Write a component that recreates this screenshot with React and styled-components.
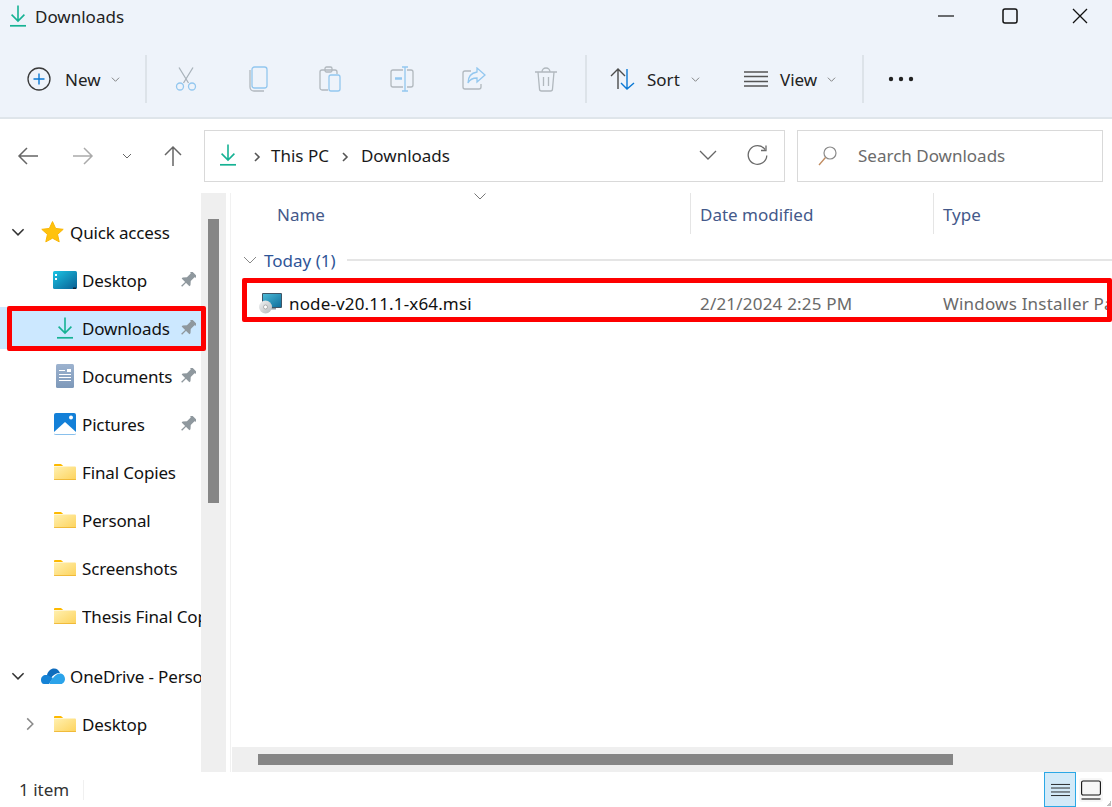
import React from "react";
import styled, { createGlobalStyle } from "styled-components";

const Global = createGlobalStyle`
  html, body { margin: 0; padding: 0; background: #fff; }
  * { box-sizing: border-box; }
`;

const Page = styled.div`
  position: relative;
  width: 1112px;
  height: 807px;
  overflow: hidden;
  display: flex;
  flex-direction: column;
  background: #fff;
  color: #1a1a1a;
  font-family: "Noto Sans", "Open Sans", sans-serif;
  font-size: 17px;
`;
const Header = styled.header`
  height: 119px;
  flex: none;
  background: #eef3fa;
  border-bottom: 2px solid #dfe5ea;
`;
const TitleBar = styled.div`
  height: 32px;
  display: flex;
  align-items: center;
  padding-left: 10px;
  gap: 9px;
`;
const TitleText = styled.span`
  font-size: 17px;
  color: #222;
`;
const WindowControls = styled.div`
  margin-left: auto;
  display: flex;
  align-items: center;
`;
const WindowButton = styled.div`
  width: ${(p) => p.$w}px;
  display: flex;
  justify-content: center;
`;
const Toolbar = styled.div`
  margin-top: 23px;
  height: 48px;
  display: flex;
  align-items: center;
`;
const Divider = styled.div`
  width: 2px;
  height: 48px;
  flex: none;
  background: #dde3e9;
`;
const ToolNew = styled.div`
  width: 145px;
  padding-left: 27px;
  display: flex;
  align-items: center;
`;
const ToolIcon = styled.div`
  width: 72px;
  display: flex;
  justify-content: center;
`;
const ToolLabel = styled.span`
  font-size: 17px;
  color: #222;
  margin: 0 ${(p) => p.$mr}px 0 ${(p) => p.$ml}px;
`;
const ToolGroup = styled.div`
  width: ${(p) => p.$w}px;
  padding-left: ${(p) => p.$pl}px;
  display: flex;
  align-items: center;
`;
const Spacer = styled.div`
  width: ${(p) => p.$w}px;
  flex: none;
`;
const AddressRow = styled.div`
  height: 74px;
  flex: none;
  display: flex;
  align-items: flex-start;
  padding-top: 11px;
`;
const NavGroup = styled.div`
  width: 204px;
  height: 52px;
  display: flex;
  align-items: center;
`;
const NavButton = styled.div`
  width: ${(p) => p.$w}px;
  display: flex;
  justify-content: center;
`;
const AddressBox = styled.div`
  width: 581px;
  height: 52px;
  border: 1px solid #d9d9d9;
  display: flex;
  align-items: center;
  padding: 0 0 2px 15px;
  color: #1a1a1a;
`;
const Crumb = styled.span`
  font-size: 17px;
  margin: 0 ${(p) => p.$mr || 0}px 0 ${(p) => p.$ml || 0}px;
`;
const AddressEnd = styled.div`
  margin-left: auto;
  display: flex;
  align-items: center;
  gap: 30px;
  padding-right: 16px;
`;
const SearchBox = styled.div`
  width: 306px;
  height: 52px;
  margin-left: 12px;
  border: 1px solid #d9d9d9;
  display: flex;
  align-items: center;
  padding: 0 0 1px 20px;
  gap: 21px;
  color: #6b6b6b;
  font-size: 17px;
`;
const Body = styled.div`
  flex: 1;
  min-height: 0;
  display: flex;
`;
const Sidebar = styled.nav`
  width: 201px;
  flex: none;
  padding-top: 15px;
  overflow: hidden;
`;
const NavRow = styled.div`
  height: 48px;
  padding: 3px 0;
`;
const RowInner = styled.div`
  height: 42px;
  display: flex;
  align-items: center;
  background: ${(p) => (p.$selected ? "#cce8ff" : "transparent")};
`;
const ChevronSlot = styled.div`
  width: ${(p) => (p.$child ? 48 : 36)}px;
  flex: none;
  display: flex;
  justify-content: center;
  padding-left: ${(p) => (p.$child ? 12 : 0)}px;
`;
const IconSlot = styled.div`
  width: ${(p) => p.$w}px;
  flex: none;
  display: flex;
  justify-content: center;
  padding-right: 1px;
`;
const NavLabel = styled.span`
  flex: 1;
  min-width: 0;
  overflow: hidden;
  white-space: nowrap;
  font-size: 17px;
  letter-spacing: -0.15px;
  color: #111;
`;
const PinSlot = styled.div`
  width: 27px;
  flex: none;
  display: flex;
  justify-content: center;
`;
const GroupGap = styled.div`
  height: 12px;
`;
const VTrack = styled.div`
  width: 25px;
  flex: none;
  background: #efefef;
  padding: 26px 7px 0;
`;
const VThumb = styled.div`
  width: 11px;
  height: 284px;
  background: #868686;
`;
const Pane = styled.section`
  flex: 1;
  min-width: 0;
  margin-left: 4px;
  border-left: 1px solid #f1f1f1;
  display: flex;
  flex-direction: column;
`;
const Columns = styled.div`
  display: grid;
  grid-template-columns: 459px 243px 1fr;
  align-items: center;
`;
const HeadCell = styled.div`
  position: relative;
  height: 41px;
  display: flex;
  align-items: center;
  padding-top: 1px;
  padding-left: ${(p) => p.$pl}px;
  border-left: ${(p) => (p.$line ? "1px solid #e5e5e5" : "none")};
  color: #44598a;
  font-size: 17px;
`;
const SortMark = styled.div`
  position: absolute;
  left: 243px;
  top: 0;
  line-height: 0;
`;
const GroupRow = styled.div`
  height: 24px;
  margin-top: 14px;
  display: flex;
  align-items: center;
  padding-left: 12px;
  color: #2f5597;
  font-size: 17px;
`;
const GroupLabel = styled.span`
  margin-left: 7px;
`;
const GroupLine = styled.div`
  flex: 1;
  height: 2px;
  margin-left: 11px;
  background: #e5e5e5;
`;
const FileRow = styled(Columns)`
  height: 44px;
  margin-top: 9px;
  white-space: nowrap;
`;
const FileName = styled.div`
  display: flex;
  align-items: center;
  gap: 7px;
  padding-left: 28px;
  font-size: 17px;
  letter-spacing: 0.15px;
  color: #111;
`;
const FileMeta = styled.div`
  padding-left: 10px;
  color: #6a6a6a;
  font-size: 17px;
  letter-spacing: 0.2px;
  overflow: hidden;
`;
const PaneFill = styled.div`
  flex: 1;
`;
const HTrack = styled.div`
  height: 25px;
  flex: none;
  margin-left: 1px;
  background: #efefef;
  padding: 7px 0 0 26px;
`;
const HThumb = styled.div`
  width: 695px;
  height: 11px;
  background: #868686;
`;
const StatusBar = styled.footer`
  height: 35px;
  flex: none;
  display: flex;
  align-items: center;
  padding-left: 19px;
  font-size: 17px;
  color: #333;
`;
const StatusLine = styled.div`
  position: relative;
  width: 1px;
  height: 20px;
  margin-left: 14px;
  background: #f0f0f0;
`;
const ViewButtons = styled.div`
  margin-left: auto;
  display: flex;
  align-items: center;
  gap: 3px;
  padding-right: 9px;
  height: 100%;
`;
const ViewButton = styled.div`
  width: ${(p) => (p.$on ? 32 : 24)}px;
  height: ${(p) => (p.$on ? 35 : 24)}px;
  display: flex;
  align-items: center;
  justify-content: center;
  background: ${(p) => (p.$on ? "#d3eaf8" : "#f6f6f6")};
  border: ${(p) => (p.$on ? "1px solid #2ba8e6" : "none")};
  border-radius: ${(p) => (p.$on ? 0 : 3)}px;
`;
const Annotation = styled.div`
  position: absolute;
  left: ${(p) => p.$x}px;
  top: ${(p) => p.$y}px;
  width: ${(p) => p.$w}px;
  height: ${(p) => p.$h}px;
  border: 5px solid #fe0000;
  border-radius: 2px;
  pointer-events: none;
`;
const ResizeGrip = styled.div`
  position: absolute;
  right: 1px;
  bottom: 1px;
  width: 5px;
  height: 5px;
  background: linear-gradient(135deg, transparent 50%, #bdbdbd 50%);
`;

const DownloadIcon = ({ w = 16, h = 22 }) => (
  <svg width={w} height={h} viewBox="0 0 16 22" fill="none" stroke="#16b294" strokeWidth="1.6">
    <path d="M8 0.5V16M1.6 9.6L8 16l6.4-6.4" />
    <path d="M0 20.8h16" strokeWidth="1.7" />
  </svg>
);
const Chev = ({ s = 10, c = "#666", w = 1, dir = "down" }) => (
  <svg width={s} height={s} viewBox="0 0 10 10" fill="none" stroke={c} strokeWidth={w}>
    <path d={dir === "down" ? "M1 3l4 4 4-4" : "M3 1l4 4-4 4"} />
  </svg>
);
const Folder = () => (
  <svg width="22" height="16" viewBox="0 0 22 16">
    <defs>
      <linearGradient id="fg" x1="0" y1="0" x2="1" y2="1">
        <stop offset="0" stopColor="#fff0b0" />
        <stop offset="1" stopColor="#fdd35c" />
      </linearGradient>
    </defs>
    <path d="M0 1.2C0 .5.5 0 1.2 0H7l2.2 2H0z" fill="#fdb900" />
    <path d="M0 2.500h21a1 1 0 0 1 1 1V15a1 1 0 0 1-1 1H1a1 1 0 0 1-1-1z" fill="url(#fg)" />
    <path d="M0 15.200h22V16H0z" fill="#eeb32e" />
  </svg>
);
const Star = () => (
  <svg width="23" height="22" viewBox="0 0 24 23">
    <path d="M12 .6l3.3 7.2 7.9.9-5.9 5.3 1.7 7.8L12 18l-7 3.8 1.7-7.8L.8 8.7l7.9-.9z" fill="#ffc20e" stroke="#f9b400" strokeWidth="1" strokeLinejoin="round" />
  </svg>
);
const Monitor = () => (
  <svg width="24" height="18" viewBox="0 0 24 18">
    <defs>
      <linearGradient id="mg" x1="0" y1="0" x2="1" y2="1">
        <stop offset="0" stopColor="#1bc4e4" />
        <stop offset="1" stopColor="#0a5f93" />
      </linearGradient>
    </defs>
    <rect width="24" height="18" rx="1.5" fill="url(#mg)" />
    <path d="M2 3h2v2H2zM2 7h2v2H2z" fill="#fff" />
    <path d="M20 16.5h3V18h-3z" fill="#123" />
  </svg>
);
const Doc = () => (
  <svg width="18" height="24" viewBox="0 0 18 24">
    <defs>
      <linearGradient id="dg" x1="0" y1="0" x2="0" y2="1">
        <stop offset="0" stopColor="#9db3cf" />
        <stop offset="1" stopColor="#7d98b9" />
      </linearGradient>
    </defs>
    <rect width="18" height="24" rx="1.5" fill="url(#dg)" />
    <path d="M3 6h6v1H3zM3 10h12v1H3zM3 13h12v1H3zM3 16h12v1H3z" fill="#fff" />
    <path d="M11 5h4v3h-4z" fill="#fff" />
  </svg>
);
const Picture = () => (
  <svg width="22" height="22" viewBox="0 0 22 22">
    <rect width="22" height="22" rx="2" fill="#1380d8" />
    <path d="M0 19L11 9l11 10v1a1.500 1.500 0 0 1-1.500 1.500h-19A1.500 1.500 0 0 1 0 20z" fill="#fff" />
    <circle cx="17" cy="4.500" r="2" fill="#fff" />
  </svg>
);
const Cloud = () => (
  <svg width="24" height="16" viewBox="0 0 24 16">
    <path d="M6 7C7 3 10 .5 13 .5c3 0 5 2 6 4.500-4 0-7 2-9 5L6 8z" fill="#0f6cbd" />
    <path d="M0 12c0-3 2-5 5-5 1.500 0 3 .5 4 1.500L12 10l-4 6H3c-2 0-3-2-3-4z" fill="#1583d6" />
    <path d="M9 16c-1 0 0-3 3-6 2-3 5-5 8-4.500 2.500.5 4 3 4 5.500s-2 5-4 5z" fill="#2ba3ea" />
  </svg>
);
const Pin = () => (
  <svg width="16" height="16" viewBox="0 0 16 16" fill="#8f989e">
    <g transform="rotate(45 8 8)">
      <path d="M4 -1h8v1.800l-1.300.7v5.300L13.500 10v1.500h-11V10l2.800-3.200V1.500L4 .8z" />
      <path d="M7.300 11h1.400v6H7.300z" />
    </g>
  </svg>
);
const MsiIcon = () => (
  <svg width="23" height="21" viewBox="0 0 23 21">
    <defs>
      <linearGradient id="msi" x1="0" y1="0" x2="1" y2="1">
        <stop offset="0" stopColor="#4bb9d6" />
        <stop offset="1" stopColor="#0f6f9c" />
      </linearGradient>
      <linearGradient id="disc" x1="0" y1="0" x2="1" y2="1">
        <stop offset="0" stopColor="#f2f3f4" />
        <stop offset="1" stopColor="#b5babd" />
      </linearGradient>
    </defs>
    <rect x="3" y="0" width="20" height="15" rx="1" fill="#3f5566" />
    <rect x="4" y="1" width="18" height="13" fill="url(#msi)" />
    <path d="M11 15h6v1.500h-6z" fill="#8b98a2" />
    <circle cx="6.500" cy="14" r="6.500" fill="url(#disc)" />
    <circle cx="6.500" cy="14" r="2" fill="#fff" stroke="#8a8a8a" strokeWidth=".6" />
  </svg>
);

const stroke = { fill: "none", strokeWidth: 1.3 };
const Cut = () => (
  <svg width="22" height="24" viewBox="0 0 22 24" {...stroke}>
    <path d="M4 .5l9.500 15.500M18 .5L8.500 16" stroke="#a9b3bb" />
    <circle cx="5" cy="19.500" r="3.500" stroke="#93c7ef" />
    <circle cx="17" cy="19.500" r="3.500" stroke="#93c7ef" />
  </svg>
);
const Copy = () => (
  <svg width="20" height="26" viewBox="0 0 20 26" {...stroke}>
    <path d="M2 4v17c0 2 1.500 4 4 4h10" stroke="#b1b8be" />
    <rect x="4" y="1" width="15" height="21" rx="2.500" stroke="#93c7ef" />
  </svg>
);
const Paste = () => (
  <svg width="22" height="26" viewBox="0 0 22 26" {...stroke}>
    <path d="M9 24H3a2 2 0 0 1-2-2V6a2 2 0 0 1 2-2h13a2 2 0 0 1 2 2v2" stroke="#b1b8be" />
    <rect x="6" y="1" width="7" height="5" rx="1.500" stroke="#b1b8be" />
    <rect x="10" y="9" width="11" height="16" rx="2" stroke="#93c7ef" />
  </svg>
);
const Rename = () => (
  <svg width="24" height="26" viewBox="0 0 24 26" {...stroke}>
    <path d="M13 4H3a2 2 0 0 0-2 2v13a2 2 0 0 0 2 2h10M17 4h4a2 2 0 0 1 2 2v13a2 2 0 0 1-2 2h-4" stroke="#b1b8be" />
    <path d="M12 1h6M15 1v24M12 25h6" stroke="#93c7ef" />
    <path d="M5 12.500h7" stroke="#93c7ef" strokeWidth="2.500" />
  </svg>
);
const Share = () => (
  <svg width="24" height="24" viewBox="0 0 24 24" {...stroke}>
    <path d="M9 4H3a2 2 0 0 0-2 2v14a2 2 0 0 0 2 2h14a2 2 0 0 0 2-2v-3" stroke="#b1b8be" />
    <path d="M15 1l8 7-8 7v-4c-4 0-7 1-9 5 0-6 3-10 9-11z" stroke="#93c7ef" />
  </svg>
);
const Trash = () => (
  <svg width="22" height="25" viewBox="0 0 22 25" {...stroke} stroke="#b1b8be">
    <path d="M0 5h22M7 5c0-2 1.500-4 4-4s4 2 4 4M3 5l1.500 17a2 2 0 0 0 2 2h9a2 2 0 0 0 2-2L19 5M8.500 10v9M13.500 10v9" />
  </svg>
);
const PlusCircle = () => (
  <svg width="24" height="24" viewBox="0 0 24 24" fill="none">
    <circle cx="12" cy="12" r="11" stroke="#3a3a3a" strokeWidth="1.300" />
    <path d="M12 6.500v11M6.500 12h11" stroke="#0a78d4" strokeWidth="1.400" />
  </svg>
);
const SortIcon = () => (
  <svg width="26" height="22" viewBox="0 0 26 22" fill="none" strokeWidth="1.400">
    <path d="M8 21V1M1 8l7-7 7 7" stroke="#4c4c4c" />
    <path d="M17 1v20M11 15l6 6 7-6" stroke="#0a78d4" />
  </svg>
);
const ListIcon = ({ c = "#555", w = 24, sw = 1.400 }) => (
  <svg width={w} height="16" viewBox="0 0 24 16" fill="none" stroke={c} strokeWidth={sw}>
    <path d="M0 1h24M0 5.500h24M0 10.500h24M0 15h24" />
  </svg>
);
const Arrow = ({ c, d }) => (
  <svg width="22" height="22" viewBox="0 0 22 22" fill="none" stroke={c} strokeWidth="1.500">
    <path d={d} />
  </svg>
);

const navItems = [
  { label: "Quick access", icon: <Star />, chev: "down", top: true },
  { label: "Desktop", icon: <Monitor />, pin: true },
  { label: "Downloads", icon: <DownloadIcon />, pin: true, selected: true },
  { label: "Documents", icon: <Doc />, pin: true },
  { label: "Pictures", icon: <Picture />, pin: true },
  { label: "Final Copies", icon: <Folder /> },
  { label: "Personal", icon: <Folder /> },
  { label: "Screenshots", icon: <Folder /> },
  { label: "Thesis Final Copies", icon: <Folder /> },
  { gap: true },
  { label: "OneDrive - Personal", icon: <Cloud />, chev: "down", top: true },
  { label: "Desktop", icon: <Folder />, chev: "right" },
];

export default function App() {
  return (
    <Page>
      <Global />
      <Header>
        <TitleBar>
          <DownloadIcon />
          <TitleText>Downloads</TitleText>
          <WindowControls>
            <WindowButton $w={52}>
              <svg width="16" height="2" viewBox="0 0 16 2"><path d="M0 1h16" stroke="#111" strokeWidth="1.200" /></svg>
            </WindowButton>
            <WindowButton $w={76}>
              <svg width="16" height="16" viewBox="0 0 16 16" fill="none"><rect x="1" y="1" width="14" height="14" rx="2" stroke="#111" strokeWidth="1.500" /></svg>
            </WindowButton>
            <WindowButton $w={64}>
              <svg width="16" height="16" viewBox="0 0 16 16" fill="none"><path d="M1 1l14 14M15 1L1 15" stroke="#111" strokeWidth="1.300" /></svg>
            </WindowButton>
          </WindowControls>
        </TitleBar>
        <Toolbar>
          <ToolNew>
            <PlusCircle />
            <ToolLabel $ml={14} $mr={10}>New</ToolLabel>
            <Chev s={9} c="#777" />
          </ToolNew>
          <Divider />
          <Spacer $w={3} />
          <ToolIcon><Cut /></ToolIcon>
          <ToolIcon><Copy /></ToolIcon>
          <ToolIcon><Paste /></ToolIcon>
          <ToolIcon><Rename /></ToolIcon>
          <ToolIcon><Share /></ToolIcon>
          <ToolIcon><Trash /></ToolIcon>
          <Spacer $w={3} />
          <Divider />
          <ToolGroup $w={132} $pl={23}>
            <SortIcon />
            <ToolLabel $ml={11} $mr={11}>Sort</ToolLabel>
            <Chev s={9} c="#777" />
          </ToolGroup>
          <ToolGroup $w={143} $pl={25}>
            <ListIcon />
            <ToolLabel $ml={12} $mr={10}>View</ToolLabel>
            <Chev s={9} c="#777" />
          </ToolGroup>
          <Divider />
          <ToolGroup $w={80} $pl={24}>
            <svg width="26" height="6" viewBox="0 0 26 6" fill="#222">
              <circle cx="3" cy="3" r="2.200" /><circle cx="13" cy="3" r="2.200" /><circle cx="23" cy="3" r="2.200" />
            </svg>
          </ToolGroup>
        </Toolbar>
      </Header>

      <AddressRow>
        <NavGroup>
          <Spacer $w={17} />
          <NavButton $w={22}><Arrow c="#666" d="M21 11H2M10 3l-8 8 8 8" /></NavButton>
          <Spacer $w={33} />
          <NavButton $w={22}><Arrow c="#aaa" d="M1 11h19M12 3l8 8-8 8" /></NavButton>
          <Spacer $w={27} />
          <NavButton $w={12}><Chev s={10} c="#666" /></NavButton>
          <Spacer $w={29} />
          <NavButton $w={22}><Arrow c="#666" d="M11 21V2M3 10l8-8 8 8" /></NavButton>
        </NavGroup>
        <AddressBox>
          <DownloadIcon />
          <Crumb $ml={16} $mr={9}><Chev s={10} c="#555" w={1.600} dir="right" /></Crumb>
          <Crumb $mr={11}>This PC</Crumb>
          <Crumb $mr={11}><Chev s={10} c="#555" w={1.600} dir="right" /></Crumb>
          <Crumb>Downloads</Crumb>
          <AddressEnd>
            <svg width="18" height="10" viewBox="0 0 18 10" fill="none" stroke="#666" strokeWidth="1.300"><path d="M1 1l8 8 8-8" /></svg>
            <svg width="21" height="21" viewBox="0 0 21 21" fill="none" stroke="#6a6a6a" strokeWidth="1.300">
              <path d="M18 4.500A9.300 9.300 0 1 0 19.800 10.500" />
              <path d="M19 .5v5h-5" stroke="#6a6a6a" />
            </svg>
          </AddressEnd>
        </AddressBox>
        <SearchBox>
          <svg width="19" height="20" viewBox="0 0 19 20" fill="none">
            <circle cx="12" cy="7" r="6" stroke="#8a8a8a" strokeWidth="1.200" />
            <path d="M7.500 11.500L1 19" stroke="#c08a5e" strokeWidth="1.300" />
          </svg>
          Search Downloads
        </SearchBox>
      </AddressRow>

      <Body>
        <Sidebar>
          {navItems.map((it, i) =>
            it.gap ? (
              <GroupGap key={i} />
            ) : (
              <NavRow key={i}>
                <RowInner $selected={it.selected}>
                  <ChevronSlot $child={!it.top}>
                    {it.chev === "down" && <Chev s={14} c="#333" w={1.100} />}
                    {it.chev === "right" && <Chev s={14} c="#8a8a8a" w={1.100} dir="right" />}
                  </ChevronSlot>
                  <IconSlot $w={34}>{it.icon}</IconSlot>
                  <NavLabel>{it.label}</NavLabel>
                  {it.pin && <PinSlot><Pin /></PinSlot>}
                </RowInner>
              </NavRow>
            )
          )}
        </Sidebar>
        <VTrack><VThumb /></VTrack>
        <Pane>
          <Columns>
            <HeadCell $pl={46}>
              Name
              <SortMark>
                <svg width="12" height="7" viewBox="0 0 12 7" fill="none" stroke="#777" strokeWidth="1"><path d="M.5.500L6 6l5.500-5.500" /></svg>
              </SortMark>
            </HeadCell>
            <HeadCell $pl={9} $line>Date modified</HeadCell>
            <HeadCell $pl={9} $line>Type</HeadCell>
          </Columns>
          <GroupRow>
            <svg width="14" height="9" viewBox="0 0 14 9" fill="none" stroke="#888" strokeWidth="1"><path d="M1 1l6 6 6-6" /></svg>
            <GroupLabel>Today (1)</GroupLabel>
            <GroupLine />
          </GroupRow>
          <FileRow>
            <FileName>
              <MsiIcon />
              node-v20.11.1-x64.msi
            </FileName>
            <FileMeta>2/21/2024 2:25 PM</FileMeta>
            <FileMeta>Windows Installer Package</FileMeta>
          </FileRow>
          <PaneFill />
          <HTrack><HThumb /></HTrack>
        </Pane>
      </Body>

      <StatusBar>
        1 item
        <StatusLine />
        <ViewButtons>
          <ViewButton $on><ListIcon c="#111" w={19} sw={1.100} /></ViewButton>
          <ViewButton>
            <svg width="20" height="20" viewBox="0 0 20 20" fill="none" stroke="#111" strokeWidth="1.100">
              <rect x=".6" y="1" width="18.800" height="14" rx="1.500" />
              <path d="M.5 19h19" />
            </svg>
          </ViewButton>
        </ViewButtons>
      </StatusBar>

      <Annotation $x={7} $y={306} $w={199} $h={45} />
      <Annotation $x={242} $y={278} $w={870} $h={44} />
      <ResizeGrip />
    </Page>
  );
}
